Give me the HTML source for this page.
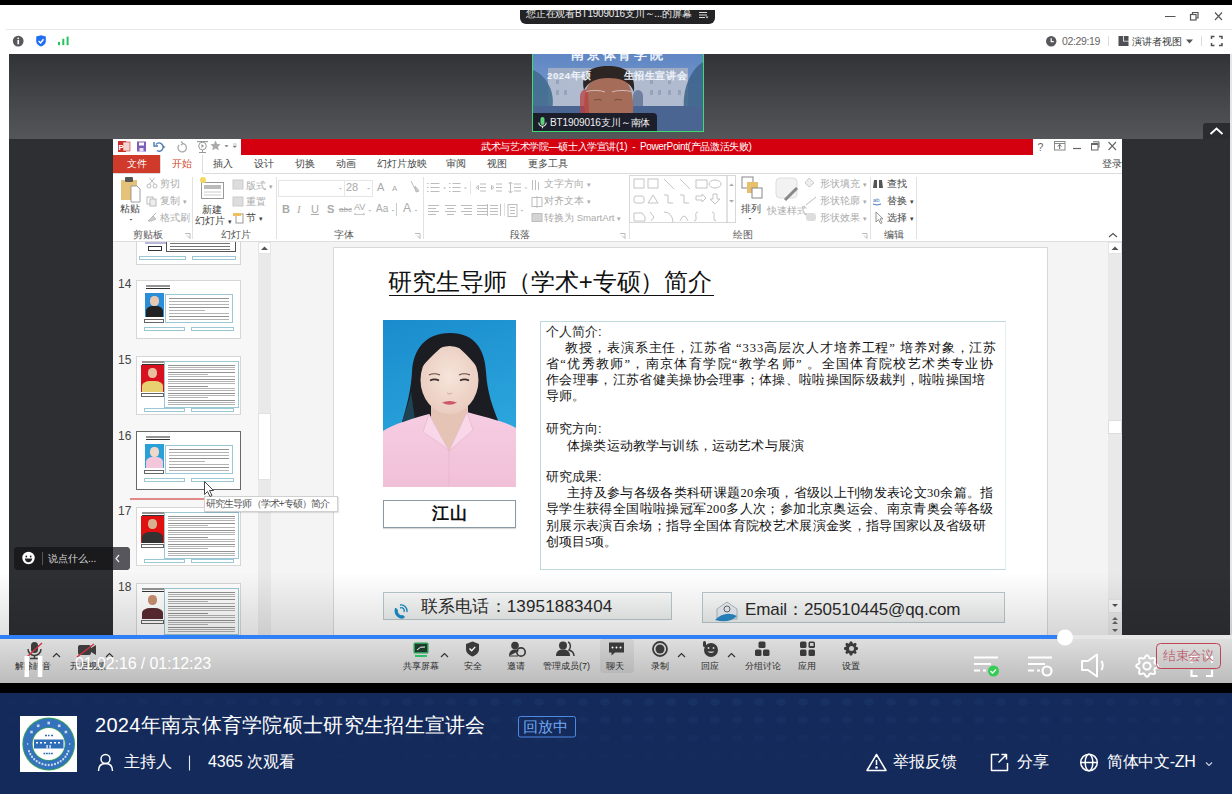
<!DOCTYPE html>
<html><head><meta charset="utf-8">
<style>
*{margin:0;padding:0;box-sizing:border-box}
html,body{width:1232px;height:794px;overflow:hidden;background:#fff;font-family:"Liberation Sans",sans-serif}
.a{position:absolute}
#topblack{left:0;top:0;width:1232px;height:5px;background:#000}
#hdr{left:0;top:5px;width:1232px;height:49px;background:#fff}
#hline{left:6px;top:29px;width:1226px;height:1px;background:#e8e8e8}
#video{left:9px;top:54px;width:1221px;height:581px;background:#2e2f33}
#vgrad{left:9px;top:54px;width:1221px;height:85px;background:linear-gradient(#323336,#55565a)}
#rightedge{left:1230px;top:54px;width:2px;height:581px;background:#e6e6e6}
#leftedge{left:0;top:54px;width:9px;height:581px;background:#fff}
#ppt{left:113px;top:139px;width:1009px;height:496px;background:#fff;overflow:hidden}
#prog{left:0;top:635px;width:1232px;height:4px;background:#e6e6e6}
#progfill{left:0;top:635px;width:1065px;height:4px;background:#2f80f7}
#ctrl{left:0;top:639px;width:1232px;height:44px;background:linear-gradient(#dedede,#bcbcbc)}
#blk{left:0;top:683px;width:1232px;height:10px;background:#000}
#foot{left:0;top:693px;width:1232px;height:101px;background:#132a5b}
</style></head><body>
<div class="a" id="topblack"></div>
<div class="a" id="hdr"></div>
<div class="a" id="hline"></div>

<div class="a" id="pill" style="left:520px;top:10px;width:195px;height:14px;background:#232325;border-radius:0 0 6px 6px;overflow:hidden"><div class="a" style="left:6px;top:-3px;white-space:nowrap;color:#eee;font-size:10px;line-height:14px;letter-spacing:-0.2px">您正在观看BT1909016支川～...的屏幕</div><svg class="a" style="left:178px;top:0" width="12" height="10"><path d="M1 2.5h8 M1 5h8 M1 7.5h6" stroke="#ddd" stroke-width="1"/><path d="M7.5 6.5 l1.5 2 l1.5-2z" fill="#ddd"/></svg></div>
<svg class="a" style="left:1160px;top:8px" width="72" height="18" viewBox="1160 8 72 18">
 <line x1="1165" y1="16.5" x2="1175.5" y2="16.5" stroke="#555" stroke-width="1"/>
 <rect x="1190.5" y="14.5" width="5.5" height="5.5" fill="none" stroke="#555" stroke-width="1.2"/>
 <path d="M1192.5 14.5 V12.5 H1198 V18 H1196" fill="none" stroke="#555" stroke-width="1.2"/>
 <path d="M1215 12.5 L1222 20 M1222 12.5 L1215 20" stroke="#555" stroke-width="1.1"/>
</svg>
<svg class="a" style="left:0;top:30px" width="80" height="24" viewBox="0 30 80 24">
 <circle cx="18.2" cy="41.1" r="5.4" fill="#57575c"/>
 <rect x="17.4" y="40" width="1.7" height="4.3" fill="#fff"/><circle cx="18.25" cy="38.3" r="0.9" fill="#fff"/>
 <path d="M36.2 36.6 L41 35.2 L45.8 36.6 V41.2 C45.8 44 43.4 45.6 41 46.6 C38.6 45.6 36.2 44 36.2 41.2 Z" fill="#1f6ef2"/>
 <path d="M38.6 41 L40.6 43 L43.5 39.3" fill="none" stroke="#fff" stroke-width="1.4"/>
 <rect x="58" y="42" width="2" height="3.2" fill="#25c35f"/>
 <rect x="62.3" y="38.8" width="2" height="6.4" fill="#25c35f"/>
 <rect x="66.6" y="36.6" width="2" height="8.6" fill="#25c35f"/>
</svg>
<svg class="a" style="left:1040px;top:30px" width="192" height="24" viewBox="1040 30 192 24">
 <circle cx="1051.2" cy="41.2" r="5.2" fill="#57575c"/>
 <path d="M1051.2 38.3 V41.6 H1053.8" fill="none" stroke="#fff" stroke-width="1.2"/>
 <line x1="1108.5" y1="36" x2="1108.5" y2="46" stroke="#ddd"/>
 <path d="M1118.5 36 h4.5 v5.5 h5.5 v4.5 h-10 z" fill="#4f4f55"/><rect x="1123.8" y="36" width="4.7" height="4.8" fill="#4f4f55"/>
 <path d="M1186 39.5 h7 l-3.5 4 z" fill="#555"/>
 <line x1="1201.5" y1="36" x2="1201.5" y2="46" stroke="#ddd"/>
 <path d="M1211.5 39 v-2.5 h3 M1219 36.5 h3 v2.5 M1222 43 v2.6 h-3 M1214.5 45.6 h-3 v-2.6" fill="none" stroke="#4f4f55" stroke-width="1.5"/>
</svg>
<div class="a" style="left:1062px;top:35px;font-size:10.5px;line-height:13px;color:#666;white-space:nowrap;letter-spacing:-0.35px">02:29:19</div>
<div class="a" style="left:1132px;top:35px;font-size:9.6px;line-height:13px;color:#333;white-space:nowrap">演讲者视图</div>
<div class="a" id="leftedge"></div>
<div class="a" id="video"></div>
<div class="a" id="vgrad"></div>
<div class="a" id="rightedge"></div>

<div class="a" id="thumb" style="left:532px;top:54px;width:172px;height:78px;border:1px solid #3ddc6f;border-top:none;overflow:hidden;background:#6f8fc0">
 <svg class="a" style="left:0;top:0" width="170" height="77" viewBox="533 54 170 77">
  <defs><linearGradient id="sky" x1="0" y1="0" x2="0" y2="1"><stop offset="0" stop-color="#5f86c4"/><stop offset="1" stop-color="#8aa6cf"/></linearGradient></defs>
  <rect x="533" y="54" width="170" height="77" fill="url(#sky)"/>
  <rect x="548" y="72" width="140" height="38" fill="#b0bbcf"/>
  <rect x="548" y="68" width="140" height="6" fill="#9eacc4"/>
  <g fill="#95a3bd"><rect x="556" y="90" width="3" height="5"/><rect x="564" y="90" width="3" height="5"/><rect x="650" y="90" width="3" height="5"/><rect x="658" y="90" width="3" height="5"/><rect x="668" y="90" width="3" height="5"/><rect x="678" y="90" width="3" height="5"/><rect x="556" y="80" width="3" height="4"/><rect x="650" y="80" width="3" height="4"/><rect x="668" y="80" width="3" height="4"/></g>
  <path d="M633 110 v-14 a5 6 0 0 1 10 0 v14z" fill="#6f7fa0"/>
  <path d="M533 70 C545 75 556 90 552 110 H533Z" fill="#3f6a8c" opacity=".85"/>
  <path d="M703 62 C690 70 682 90 684 110 H703Z" fill="#3c6288" opacity=".85"/>
  <rect x="533" y="106" width="170" height="25" fill="#4a6592"/>
  <path d="M585 113 C583 95 584 78 608 74 C630 74 634 92 633 113Z" fill="#a66c5a"/>
  <path d="M584 90 C580 72 592 66 608 66 C624 66 636 72 634 92 C630 82 622 78 608 78 C596 78 588 82 584 90Z" fill="#2c2523"/>
  <path d="M580 96 C581 90 585 88 588 91 L589 113 H580Z" fill="#b84040" opacity=".75"/>
  <path d="M586 91.5 C592 90 600 90 605 92 M612 92 C617 90 626 90 631 91.5" stroke="#ddd2d2" stroke-width="1" fill="none" opacity=".75"/>
  <path d="M594 100 q4-1 8 0 M614 100 q4-1 8 0" stroke="#5a3a30" stroke-width="0.9" fill="none" opacity=".7"/>
 </svg>
 <div class="a" style="left:38px;top:-6px;color:#eef3fb;font-size:13px;font-weight:bold;line-height:14px;letter-spacing:2.8px;white-space:nowrap">南京体育学院</div>
 <div class="a" style="left:14px;top:16px;width:150px;color:#eef3fb;font-size:9.5px;font-weight:bold;line-height:11px;white-space:nowrap;letter-spacing:0.6px">2024年硕<span style="opacity:0">士研究</span>生招生宣讲会</div>
 <div class="a" style="left:0;top:59px;width:124px;height:19px;background:rgba(22,22,28,.88);border-radius:0 4px 0 0"></div>
 <svg class="a" style="left:4px;top:62px" width="12" height="14"><rect x="3.5" y="1" width="4" height="8" rx="2" fill="#5fd37a"/><path d="M1.8 6.5 a3.7 3.7 0 0 0 7.4 0 M5.5 10.2 v2" fill="none" stroke="#e8e8e8" stroke-width="1.1"/></svg>
 <div class="a" style="left:17px;top:62px;color:#f0f0f0;font-size:10px;line-height:13px;white-space:nowrap;letter-spacing:-0.1px">BT1909016支川～南体</div>
</div>
<div class="a" id="ppt"></div>

<!-- PPT window -->
<div class="a" style="left:241px;top:139px;width:792px;height:16px;background:#d5000f"></div>
<div class="a" style="left:481px;top:139px;height:16px;color:#fff;font-size:10px;line-height:16px;white-space:nowrap;letter-spacing:-0.35px">武术与艺术学院—硕士入学宣讲(1)&nbsp; - &nbsp;PowerPoint(产品激活失败)</div>
<svg class="a" style="left:113px;top:139px" width="130" height="16" viewBox="113 139 130 16">
 <rect x="118" y="141" width="8" height="11" fill="#c9302c"/><rect x="123" y="142" width="7" height="9" fill="#f3d6d3" stroke="#c9302c" stroke-width="0.6"/>
 <text x="118.5" y="150" font-size="8" fill="#fff" font-family="Liberation Sans" font-weight="bold">P</text>
 <rect x="137" y="141.5" width="9" height="10" fill="#7b5fb8"/><rect x="139" y="142.5" width="5" height="3" fill="#fff"/><rect x="139.5" y="148" width="4" height="3.5" fill="#e8e0f5"/>
 <path d="M156 144.5 a4 4 0 1 1 1 6" fill="none" stroke="#4a7ab8" stroke-width="1.4"/><path d="M154 142 v4 h4" fill="none" stroke="#4a7ab8" stroke-width="1.4"/>
 <path d="M162.5 146.5 l1.5 1.5 l1.5-1.5z" fill="#555"/>
 <path d="M182 143.5 a4.2 4.2 0 1 1 -3 1.5" fill="none" stroke="#aaa" stroke-width="1.3"/><path d="M181 141.5 l2 2 l-2.3 1.8" fill="none" stroke="#aaa" stroke-width="1.1"/>
 <rect x="197" y="141" width="11" height="1.2" fill="#999"/><circle cx="202.5" cy="146" r="3.8" fill="none" stroke="#999" stroke-width="1"/><path d="M201.5 144 l2.5 2 l-2.5 2z" fill="#999"/><path d="M202.5 150 v2.5 M199 152.5 h7" stroke="#999" stroke-width="1"/>
 <path d="M215.5 140.5 l1.6 3.4 3.6.4 -2.7 2.4 .8 3.6 -3.3-1.9 -3.3 1.9 .8-3.6 -2.7-2.4 3.6-.4z" fill="#aaa"/>
 <path d="M225 145.5 l1.5 1.5 l1.5-1.5z M233 144 h3.5 M233 146 l1.75 1.6 l1.75-1.6z" fill="#777" stroke="#777" stroke-width="0.5"/>
</svg>
<svg class="a" style="left:1033px;top:139px" width="89" height="16" viewBox="1033 139 89 16">
 <text x="1037.5" y="150.5" font-size="10.5" fill="#666" font-family="Liberation Sans">?</text>
 <rect x="1054.5" y="141.5" width="10.5" height="8.5" fill="none" stroke="#888" stroke-width="1"/><path d="M1054.5 143.5 h10.5" stroke="#888"/><path d="M1059.7 149 v-4.5 M1057.8 146.5 l1.9-2 1.9 2" fill="none" stroke="#666" stroke-width="1"/>
 <path d="M1073 148.5 h8" stroke="#666" stroke-width="1.2"/>
 <rect x="1091.5" y="143.5" width="6.5" height="6.5" fill="none" stroke="#666" stroke-width="1"/><path d="M1091.5 144.5 h6.5 M1093 141.8 h6 v6" fill="none" stroke="#666" stroke-width="1"/>
 <path d="M1108.5 142 l7.5 8 M1116 142 l-7.5 8" stroke="#666" stroke-width="1.1"/>
</svg>
<!-- tabs row -->
<div class="a" style="left:113px;top:155px;width:47px;height:18px;background:#cf3a2a;color:#fff;font-size:10px;line-height:18px;text-align:center">文件</div>
<div class="a" style="left:160px;top:155px;width:43px;height:19px;background:#fff;border-left:1px solid #dcdcdc;border-right:1px solid #dcdcdc;color:#d24726;font-size:10px;line-height:18px;text-align:center">开始</div>
<div class="a" style="left:113px;top:173px;width:1009px;height:1px;background:#dcdcdc"></div>
<div class="a" style="left:160px;top:173px;width:43px;height:1px;background:#fff"></div>
<div class="a" id="tabs" style="top:155px;left:0;height:18px;font-size:10px;line-height:18px;color:#444;white-space:nowrap"></div>
<div class="a" style="left:213px;top:155px;font-size:10px;line-height:18px;color:#444">插入</div>
<div class="a" style="left:254px;top:155px;font-size:10px;line-height:18px;color:#444">设计</div>
<div class="a" style="left:295px;top:155px;font-size:10px;line-height:18px;color:#444">切换</div>
<div class="a" style="left:336px;top:155px;font-size:10px;line-height:18px;color:#444">动画</div>
<div class="a" style="left:377px;top:155px;font-size:10px;line-height:18px;color:#444">幻灯片放映</div>
<div class="a" style="left:446px;top:155px;font-size:10px;line-height:18px;color:#444">审阅</div>
<div class="a" style="left:487px;top:155px;font-size:10px;line-height:18px;color:#444">视图</div>
<div class="a" style="left:528px;top:155px;font-size:10px;line-height:18px;color:#444">更多工具</div>
<div class="a" style="left:1102px;top:155px;font-size:10px;line-height:18px;color:#444">登录</div>

<!-- panels -->
<div class="a" style="left:113px;top:242px;width:145px;height:393px;background:#f7f7f7"></div>
<div class="a" style="left:258px;top:242px;width:13px;height:393px;background:#e9e9e9"></div>
<div class="a" style="left:258px;top:242px;width:13px;height:12px;background:#fff;border:1px solid #e4e4e4"></div>
<svg class="a" style="left:258px;top:242px" width="13" height="12"><path d="M3 8 l3.5-3.5 l3.5 3.5z" fill="#555"/></svg>
<div class="a" style="left:258px;top:413px;width:13px;height:67px;background:#fff;border:1px solid #e2e2e2"></div>
<div class="a" style="left:271px;top:242px;width:837px;height:393px;background:#f4f4f4"></div>
<div class="a" style="left:1108px;top:242px;width:14px;height:393px;background:#e9e9e9"></div>
<div class="a" style="left:1108px;top:242px;width:14px;height:12px;background:#fff;border:1px solid #e4e4e4"></div>
<svg class="a" style="left:1108px;top:242px" width="14" height="12"><path d="M3.5 8 l3.5-3.5 l3.5 3.5z" fill="#555"/></svg>
<div class="a" style="left:1108px;top:420px;width:14px;height:14px;background:#fff;border:1px solid #ddd"></div>
<div class="a" style="left:1108px;top:599px;width:14px;height:14px;background:#f8f8f8;border:1px solid #e4e4e4"></div>
<svg class="a" style="left:1108px;top:599px" width="14" height="36"><path d="M4 5 l3 3 l3-3z" fill="#555"/><path d="M4 21 l3-3 l3 3z M4 25 l3-3 l3 3z M4 30 l3 3 l3-3z" fill="#666"/></svg>
<div class="a" style="left:136px;top:242px;width:105px;height:23px;background:#fff;border:1px solid #d6d6d6;border-top:none;overflow:hidden">
 <div class="a" style="left:8px;top:0;width:21px;height:1.5px;background:#b8b8d8"></div>
 <div class="a" style="left:11px;top:4px;width:14px;height:5px;border:1px solid #333"></div>
 <div class="a" style="left:29px;top:-2px;width:70px;height:12px;border:1px solid #555"><div class="a" style="left:3px;top:2px;width:60px;height:1px;background:#777"></div><div class="a" style="left:3px;top:5px;width:60px;height:1px;background:#777"></div><div class="a" style="left:3px;top:8px;width:60px;height:1px;background:#777"></div></div>
 <div class="a" style="left:2px;top:14px;width:47px;height:4px;border:0.8px solid #9cc8d6"></div>
 <div class="a" style="left:55px;top:14px;width:44px;height:4px;border:0.8px solid #9cc8d6"></div>
</div><div class="a" style="left:136px;top:280px;width:105px;height:59px;background:#fff;border:1px solid #d6d6d6;overflow:hidden">
 <div class="a" style="left:9px;top:4px;width:24px;height:2px;background:#666;opacity:.7"></div>
 <div class="a" style="left:9px;top:6.5px;width:24px;height:0.6px;background:#333"></div>
 <div class="a" style="left:8px;top:12px;width:19px;height:24px;background:#2a8fd8;overflow:hidden"><div class="a" style="left:5.0px;top:3px;width:9px;height:10px;border-radius:45%;background:#e8c8b0"></div><div class="a" style="left:1px;top:13px;width:17px;height:12px;border-radius:40% 40% 0 0;background:#222"></div></div>
 <div class="a" style="left:7px;top:38px;width:20px;height:4px;border:0.8px solid #666"></div>
 <div class="a" style="left:28px;top:13px;width:68px;height:29px;border:0.8px solid #9cc8d6;background:#fff"><div class="a" style="left:3px;top:2.5px;width:60px;height:0.8px;background:#777;opacity:0.8"></div><div class="a" style="left:3px;top:5.5px;width:60px;height:0.8px;background:#777;opacity:0.55"></div><div class="a" style="left:3px;top:8.5px;width:60px;height:0.8px;background:#777;opacity:0.55"></div><div class="a" style="left:3px;top:11.5px;width:60px;height:0.8px;background:#777;opacity:0.8"></div><div class="a" style="left:3px;top:14.5px;width:36px;height:0.8px;background:#777;opacity:0.55"></div><div class="a" style="left:3px;top:17.5px;width:60px;height:0.8px;background:#777;opacity:0.55"></div><div class="a" style="left:3px;top:20.5px;width:60px;height:0.8px;background:#777;opacity:0.8"></div><div class="a" style="left:3px;top:23.5px;width:60px;height:0.8px;background:#777;opacity:0.55"></div></div>
 <div class="a" style="left:7px;top:46px;width:41px;height:4px;border:0.8px solid #9cc8d6"></div>
 <div class="a" style="left:54px;top:46px;width:43px;height:4px;border:0.8px solid #9cc8d6"></div>
</div><div class="a" style="left:136px;top:356px;width:105px;height:59px;background:#fff;border:1px solid #d6d6d6;overflow:hidden">
 <div class="a" style="left:5px;top:4px;width:24px;height:2px;background:#666;opacity:.7"></div>
 <div class="a" style="left:5px;top:6.5px;width:24px;height:0.6px;background:#333"></div>
 <div class="a" style="left:4px;top:8px;width:23px;height:27px;background:#d81020;overflow:hidden"><div class="a" style="left:7.0px;top:3px;width:9px;height:10px;border-radius:45%;background:#e8c0a0"></div><div class="a" style="left:1px;top:16px;width:21px;height:12px;border-radius:40% 40% 0 0;background:#e8d070"></div></div>
 <div class="a" style="left:4px;top:36px;width:23px;height:4px;border:0.8px solid #666"></div>
 <div class="a" style="left:27px;top:4px;width:75px;height:47px;border:0.8px solid #9cc8d6;background:#fff"><div class="a" style="left:3px;top:2.5px;width:67px;height:0.8px;background:#777;opacity:0.8"></div><div class="a" style="left:3px;top:4.8px;width:67px;height:0.8px;background:#777;opacity:0.55"></div><div class="a" style="left:3px;top:7.2px;width:67px;height:0.8px;background:#777;opacity:0.55"></div><div class="a" style="left:3px;top:9.5px;width:67px;height:0.8px;background:#777;opacity:0.8"></div><div class="a" style="left:3px;top:11.8px;width:40px;height:0.8px;background:#777;opacity:0.55"></div><div class="a" style="left:3px;top:14.2px;width:67px;height:0.8px;background:#777;opacity:0.55"></div><div class="a" style="left:3px;top:16.5px;width:67px;height:0.8px;background:#777;opacity:0.8"></div><div class="a" style="left:3px;top:18.8px;width:67px;height:0.8px;background:#777;opacity:0.55"></div><div class="a" style="left:3px;top:21.2px;width:67px;height:0.8px;background:#777;opacity:0.55"></div><div class="a" style="left:3px;top:23.5px;width:40px;height:0.8px;background:#777;opacity:0.8"></div><div class="a" style="left:3px;top:25.8px;width:67px;height:0.8px;background:#777;opacity:0.55"></div><div class="a" style="left:3px;top:28.2px;width:67px;height:0.8px;background:#777;opacity:0.55"></div><div class="a" style="left:3px;top:30.5px;width:67px;height:0.8px;background:#777;opacity:0.8"></div><div class="a" style="left:3px;top:32.8px;width:67px;height:0.8px;background:#777;opacity:0.55"></div><div class="a" style="left:3px;top:35.2px;width:40px;height:0.8px;background:#777;opacity:0.55"></div><div class="a" style="left:3px;top:37.5px;width:67px;height:0.8px;background:#777;opacity:0.8"></div><div class="a" style="left:3px;top:39.8px;width:67px;height:0.8px;background:#777;opacity:0.55"></div><div class="a" style="left:3px;top:42.2px;width:67px;height:0.8px;background:#777;opacity:0.55"></div></div>
 <div class="a" style="left:7px;top:51px;width:41px;height:4px;border:0.8px solid #9cc8d6"></div>
 <div class="a" style="left:54px;top:51px;width:43px;height:4px;border:0.8px solid #9cc8d6"></div>
</div><div class="a" style="left:136px;top:431px;width:105px;height:59px;background:#fff;border:1px solid #6a6a6a;overflow:hidden">
 <div class="a" style="left:9px;top:4px;width:24px;height:2px;background:#666;opacity:.7"></div>
 <div class="a" style="left:9px;top:6.5px;width:24px;height:0.6px;background:#333"></div>
 <div class="a" style="left:8px;top:12px;width:19px;height:24px;background:#2aa0d8;overflow:hidden"><div class="a" style="left:5.0px;top:3px;width:9px;height:10px;border-radius:45%;background:#f0d8c8"></div><div class="a" style="left:1px;top:13px;width:17px;height:12px;border-radius:40% 40% 0 0;background:#f4c6dc"></div></div>
 <div class="a" style="left:7px;top:38px;width:20px;height:4px;border:0.8px solid #666"></div>
 <div class="a" style="left:28px;top:13px;width:68px;height:29px;border:0.8px solid #9cc8d6;background:#fff"><div class="a" style="left:3px;top:2.5px;width:60px;height:0.8px;background:#777;opacity:0.8"></div><div class="a" style="left:3px;top:5.5px;width:60px;height:0.8px;background:#777;opacity:0.55"></div><div class="a" style="left:3px;top:8.5px;width:60px;height:0.8px;background:#777;opacity:0.55"></div><div class="a" style="left:3px;top:11.5px;width:60px;height:0.8px;background:#777;opacity:0.8"></div><div class="a" style="left:3px;top:14.5px;width:36px;height:0.8px;background:#777;opacity:0.55"></div><div class="a" style="left:3px;top:17.5px;width:60px;height:0.8px;background:#777;opacity:0.55"></div><div class="a" style="left:3px;top:20.5px;width:60px;height:0.8px;background:#777;opacity:0.8"></div><div class="a" style="left:3px;top:23.5px;width:60px;height:0.8px;background:#777;opacity:0.55"></div></div>
 <div class="a" style="left:7px;top:46px;width:41px;height:4px;border:0.8px solid #9cc8d6"></div>
 <div class="a" style="left:54px;top:46px;width:43px;height:4px;border:0.8px solid #9cc8d6"></div>
</div><div class="a" style="left:136px;top:507px;width:105px;height:59px;background:#fff;border:1px solid #d6d6d6;overflow:hidden">
 <div class="a" style="left:5px;top:4px;width:24px;height:2px;background:#666;opacity:.7"></div>
 <div class="a" style="left:5px;top:6.5px;width:24px;height:0.6px;background:#333"></div>
 <div class="a" style="left:4px;top:8px;width:23px;height:27px;background:#e01010;overflow:hidden"><div class="a" style="left:7.0px;top:3px;width:9px;height:10px;border-radius:45%;background:#d8b090"></div><div class="a" style="left:1px;top:16px;width:21px;height:12px;border-radius:40% 40% 0 0;background:#333"></div></div>
 <div class="a" style="left:4px;top:36px;width:23px;height:4px;border:0.8px solid #666"></div>
 <div class="a" style="left:27px;top:4px;width:75px;height:47px;border:0.8px solid #9cc8d6;background:#fff"><div class="a" style="left:3px;top:2.5px;width:67px;height:0.8px;background:#777;opacity:0.8"></div><div class="a" style="left:3px;top:4.8px;width:67px;height:0.8px;background:#777;opacity:0.55"></div><div class="a" style="left:3px;top:7.2px;width:67px;height:0.8px;background:#777;opacity:0.55"></div><div class="a" style="left:3px;top:9.5px;width:67px;height:0.8px;background:#777;opacity:0.8"></div><div class="a" style="left:3px;top:11.8px;width:40px;height:0.8px;background:#777;opacity:0.55"></div><div class="a" style="left:3px;top:14.2px;width:67px;height:0.8px;background:#777;opacity:0.55"></div><div class="a" style="left:3px;top:16.5px;width:67px;height:0.8px;background:#777;opacity:0.8"></div><div class="a" style="left:3px;top:18.8px;width:67px;height:0.8px;background:#777;opacity:0.55"></div><div class="a" style="left:3px;top:21.2px;width:67px;height:0.8px;background:#777;opacity:0.55"></div><div class="a" style="left:3px;top:23.5px;width:40px;height:0.8px;background:#777;opacity:0.8"></div><div class="a" style="left:3px;top:25.8px;width:67px;height:0.8px;background:#777;opacity:0.55"></div><div class="a" style="left:3px;top:28.2px;width:67px;height:0.8px;background:#777;opacity:0.55"></div><div class="a" style="left:3px;top:30.5px;width:67px;height:0.8px;background:#777;opacity:0.8"></div><div class="a" style="left:3px;top:32.8px;width:67px;height:0.8px;background:#777;opacity:0.55"></div><div class="a" style="left:3px;top:35.2px;width:40px;height:0.8px;background:#777;opacity:0.55"></div><div class="a" style="left:3px;top:37.5px;width:67px;height:0.8px;background:#777;opacity:0.8"></div><div class="a" style="left:3px;top:39.8px;width:67px;height:0.8px;background:#777;opacity:0.55"></div><div class="a" style="left:3px;top:42.2px;width:67px;height:0.8px;background:#777;opacity:0.55"></div></div>
 <div class="a" style="left:7px;top:51px;width:41px;height:4px;border:0.8px solid #9cc8d6"></div>
 <div class="a" style="left:54px;top:51px;width:43px;height:4px;border:0.8px solid #9cc8d6"></div>
</div><div class="a" style="left:136px;top:583px;width:105px;height:59px;background:#fff;border:1px solid #d6d6d6;overflow:hidden">
 <div class="a" style="left:5px;top:4px;width:24px;height:2px;background:#666;opacity:.7"></div>
 <div class="a" style="left:5px;top:6.5px;width:24px;height:0.6px;background:#333"></div>
 <div class="a" style="left:4px;top:8px;width:23px;height:27px;background:#ffffff;overflow:hidden"><div class="a" style="left:7.0px;top:3px;width:9px;height:10px;border-radius:45%;background:#c89070"></div><div class="a" style="left:1px;top:16px;width:21px;height:12px;border-radius:40% 40% 0 0;background:#5a2a30"></div></div>
 <div class="a" style="left:4px;top:36px;width:23px;height:4px;border:0.8px solid #666"></div>
 <div class="a" style="left:27px;top:4px;width:75px;height:47px;border:0.8px solid #9cc8d6;background:#fff"><div class="a" style="left:3px;top:2.5px;width:67px;height:0.8px;background:#777;opacity:0.8"></div><div class="a" style="left:3px;top:4.8px;width:67px;height:0.8px;background:#777;opacity:0.55"></div><div class="a" style="left:3px;top:7.2px;width:67px;height:0.8px;background:#777;opacity:0.55"></div><div class="a" style="left:3px;top:9.5px;width:67px;height:0.8px;background:#777;opacity:0.8"></div><div class="a" style="left:3px;top:11.8px;width:40px;height:0.8px;background:#777;opacity:0.55"></div><div class="a" style="left:3px;top:14.2px;width:67px;height:0.8px;background:#777;opacity:0.55"></div><div class="a" style="left:3px;top:16.5px;width:67px;height:0.8px;background:#777;opacity:0.8"></div><div class="a" style="left:3px;top:18.8px;width:67px;height:0.8px;background:#777;opacity:0.55"></div><div class="a" style="left:3px;top:21.2px;width:67px;height:0.8px;background:#777;opacity:0.55"></div><div class="a" style="left:3px;top:23.5px;width:40px;height:0.8px;background:#777;opacity:0.8"></div><div class="a" style="left:3px;top:25.8px;width:67px;height:0.8px;background:#777;opacity:0.55"></div><div class="a" style="left:3px;top:28.2px;width:67px;height:0.8px;background:#777;opacity:0.55"></div><div class="a" style="left:3px;top:30.5px;width:67px;height:0.8px;background:#777;opacity:0.8"></div><div class="a" style="left:3px;top:32.8px;width:67px;height:0.8px;background:#777;opacity:0.55"></div><div class="a" style="left:3px;top:35.2px;width:40px;height:0.8px;background:#777;opacity:0.55"></div><div class="a" style="left:3px;top:37.5px;width:67px;height:0.8px;background:#777;opacity:0.8"></div><div class="a" style="left:3px;top:39.8px;width:67px;height:0.8px;background:#777;opacity:0.55"></div><div class="a" style="left:3px;top:42.2px;width:67px;height:0.8px;background:#777;opacity:0.55"></div></div>
 <div class="a" style="left:7px;top:51px;width:41px;height:4px;border:0.8px solid #9cc8d6"></div>
 <div class="a" style="left:54px;top:51px;width:43px;height:4px;border:0.8px solid #9cc8d6"></div>
</div><div class="a" style="left:118px;top:276px;font-size:12px;line-height:16px;color:#444">14</div><div class="a" style="left:118px;top:352px;font-size:12px;line-height:16px;color:#444">15</div><div class="a" style="left:118px;top:428px;font-size:12px;line-height:16px;color:#444">16</div><div class="a" style="left:118px;top:503px;font-size:12px;line-height:16px;color:#444">17</div><div class="a" style="left:118px;top:579px;font-size:12px;line-height:16px;color:#444">18</div><!-- main slide -->
<div class="a" id="slide" style="left:333px;top:247px;width:715px;height:402px;background:#fff;border:1px solid #d8d8d8;overflow:hidden">
 <div class="a" style="left:54px;top:19px;font-size:24px;line-height:30px;color:#111;white-space:nowrap;letter-spacing:-0.15px">研究生导师（学术+专硕）简介</div>
 <div class="a" style="left:55px;top:47px;width:325px;height:1.2px;background:#111"></div>
 <svg class="a" style="left:49px;top:72px" width="133" height="167" viewBox="0 0 133 167">
  <defs><linearGradient id="bg1" x1="0" y1="0" x2="0.3" y2="1"><stop offset="0" stop-color="#1a8ccd"/><stop offset="1" stop-color="#2eaadf"/></linearGradient>
  <linearGradient id="shirt" x1="0" y1="0" x2="0" y2="1"><stop offset="0" stop-color="#f6cde2"/><stop offset="1" stop-color="#f1c0d8"/></linearGradient>
  <radialGradient id="skin" cx="0.5" cy="0.45" r="0.6"><stop offset="0" stop-color="#f6e4da"/><stop offset="1" stop-color="#e9cbbd"/></radialGradient></defs>
  <rect x="0" y="0" width="133" height="167" fill="url(#bg1)"/>
  <path d="M67 13 C42 13 30 30 29 52 C28 70 24 85 19 102 C28 108 42 104 50 100 L84 100 C94 104 106 108 116 103 C110 88 104 72 103 52 C102 30 92 13 67 13Z" fill="#1c1d22"/>
  <path d="M19 102 C22 92 26 82 28 72 L32 100Z" fill="#1f4d63" opacity=".8"/>
  <path d="M48 84 H85 V112 L66 132 L48 112Z" fill="#e6c4b5"/>
  <ellipse cx="66.5" cy="60" rx="29" ry="34" fill="url(#skin)"/>
  <path d="M38 48 C40 28 52 20 67 20 C60 26 50 34 38 48Z M95 48 C93 28 82 20 67 20 C74 26 84 34 95 48Z" fill="#1c1d22"/>
  <path d="M46 55 q5-2.5 11 0 M76 55 q5-2.5 11 0" stroke="#6a4a40" stroke-width="1.2" fill="none"/>
  <path d="M47 60.5 q4.5-2.2 9 0 M77 60.5 q4.5-2.2 9 0" stroke="#3a2a28" stroke-width="1.6" fill="none"/>
  <path d="M64 73 q2.5 2 5 0" stroke="#d2a898" stroke-width="1" fill="none"/>
  <path d="M59 82.5 q7.5-3 15 0 q-7.5 4.5 -15 0z" fill="#cc5866"/>
  <path d="M0 111 C10 104 32 98 46 94 L66 131 L84 92 C100 97 122 101 133 108 V167 H0Z" fill="url(#shirt)"/>
  <path d="M46 94 L40 112 L58 124 L66 131Z M84 92 L90 110 L74 124 L66 131Z" fill="#f8d8e8" stroke="#e4b0c8" stroke-width="0.6"/>
  <path d="M66 131 V167" stroke="#e8b6cc" stroke-width="0.8"/>
 </svg>
 <div class="a" style="left:49px;top:252px;width:133px;height:28px;border:1px solid #8a9aa4;box-shadow:0 1px 1px rgba(0,0,0,.15);text-align:center;font-size:17px;line-height:26px;font-weight:bold;color:#111;letter-spacing:1px">江山</div>
 <div class="a" style="left:206px;top:73px;width:466px;height:249px;border:1px solid #bcd8de;border-right-color:#e6eff2"></div>
 <div class="a" id="tb" style="left:212px;top:76px;width:460px;color:#111">
  <style>#tb div{position:absolute;left:0;white-space:nowrap}#tb .h{font-size:13px;line-height:16px;color:#222}#tb .b{font-size:12.5px;line-height:16px;font-family:"Liberation Serif",serif;color:#111}</style>
  <div class="h" style="top:0">个人简介:</div>
  <div class="b" style="top:16px;left:19px;letter-spacing:0.92px">教授，表演系主任，江苏省 “333高层次人才培养工程” 培养对象，江苏</div>
  <div class="b" style="top:32px;letter-spacing:1.34px">省“优秀教师”，南京体育学院“教学名师” 。全国体育院校艺术类专业协</div>
  <div class="b" style="top:48px;letter-spacing:0.32px">作会理事，江苏省健美操协会理事；体操、啦啦操国际级裁判，啦啦操国培</div>
  <div class="b" style="top:64px">导师。</div>
  <div class="h" style="top:97px">研究方向:</div>
  <div class="b" style="top:114px;left:21px;letter-spacing:0.17px">体操类运动教学与训练，运动艺术与展演</div>
  <div class="h" style="top:145px">研究成果:</div>
  <div class="b" style="top:161px;left:21px;letter-spacing:0.34px">主持及参与各级各类科研课题20余项，省级以上刊物发表论文30余篇。指</div>
  <div class="b" style="top:177px;letter-spacing:0.37px">导学生获得全国啦啦操冠军200多人次；参加北京奥运会、南京青奥会等各级</div>
  <div class="b" style="top:194px;letter-spacing:0.33px">别展示表演百余场；指导全国体育院校艺术展演金奖，指导国家以及省级研</div>
  <div class="b" style="top:210px">创项目5项。</div>
 </div>
 <div class="a" style="left:49px;top:344px;width:289px;height:28px;border:1px solid #b8c8cc;background:linear-gradient(#fafafa,#eef0f0)"></div>
 <svg class="a" style="left:58px;top:354px" width="18" height="18"><path d="M3 6 q-2 6 4 10 q4 2 6 -1 l-2-2 q-2 1-4-1 q-2-2-1-4 l-2-2z" fill="#1a8fc8"/><path d="M8 3 a6 6 0 0 1 7 7 M8 6 a3 3 0 0 1 4 4" fill="none" stroke="#1a8fc8" stroke-width="1.4"/></svg>
 <div class="a" style="left:87px;top:348px;font-size:17px;line-height:22px;color:#2a2a2a;white-space:nowrap;letter-spacing:0.15px">联系电话：13951883404</div>
 <div class="a" style="left:368px;top:344px;width:303px;height:31px;border:1px solid #b8c8cc;background:linear-gradient(#fafafa,#eef0f0)"></div>
 <svg class="a" style="left:380px;top:352px" width="26" height="22"><path d="M3 9 l10-7 l10 7 v10 h-20z" fill="#e8eef4" stroke="#9aa" stroke-width="0.8"/><circle cx="13" cy="9" r="3" fill="none" stroke="#555" stroke-width="0.9"/><path d="M1 20 q10 -10 22 -4 q-8 8 -22 4z" fill="#2a8ac8"/></svg>
 <div class="a" style="left:411px;top:351px;font-size:17px;line-height:22px;color:#2a2a2a;white-space:nowrap;letter-spacing:-0.1px">Email：250510445@qq.com</div>
</div>
<!-- ribbon body -->
<div class="a" style="left:113px;top:241px;width:1009px;height:1px;background:#dedede"></div>

<div class="a" style="left:192px;top:177px;width:1px;height:62px;background:#e2e2e2"></div>
<div class="a" style="left:276px;top:177px;width:1px;height:62px;background:#e2e2e2"></div>
<div class="a" style="left:423px;top:177px;width:1px;height:62px;background:#e2e2e2"></div>
<div class="a" style="left:629px;top:177px;width:1px;height:62px;background:#e2e2e2"></div>
<div class="a" style="left:870px;top:177px;width:1px;height:62px;background:#e2e2e2"></div>
<div class="a" style="left:916px;top:177px;width:1px;height:62px;background:#e2e2e2"></div>
<div class="a rb" style="left:0;top:0">
<style>.rb div{position:absolute;font-size:9.6px;line-height:11px;white-space:nowrap;color:#444}.rb .g{color:#aaa}</style>
<div style="left:120px;top:203px">粘贴</div>
<div class="g" style="left:160px;top:178px">剪切</div>
<div class="g" style="left:160px;top:195px">复制 <span style="font-size:7px">▾</span></div>
<div class="g" style="left:160px;top:212px">格式刷</div>
<div style="left:133px;top:229px;color:#555">剪贴板</div>
<div style="left:202px;top:204px">新建</div>
<div style="left:195px;top:215px">幻灯片 <span style="font-size:7px">▾</span></div>
<div class="g" style="left:246px;top:180px">版式 <span style="font-size:7px">▾</span></div>
<div class="g" style="left:246px;top:196px">重置</div>
<div style="left:246px;top:212px">节 <span style="font-size:7px">▾</span></div>
<div style="left:221px;top:229px;color:#555">幻灯片</div>
<div style="left:334px;top:229px;color:#555">字体</div>
<div class="g" style="left:544px;top:178px">文字方向 <span style="font-size:7px">▾</span></div>
<div class="g" style="left:544px;top:195px">对齐文本 <span style="font-size:7px">▾</span></div>
<div class="g" style="left:544px;top:212px">转换为 SmartArt <span style="font-size:7px">▾</span></div>
<div style="left:510px;top:229px;color:#555">段落</div>
<div style="left:741px;top:203px;font-size:10px">排列</div>
<div class="g" style="left:767px;top:205px">快速样式</div>
<div class="g" style="left:820px;top:178px">形状填充 <span style="font-size:7px">▾</span></div>
<div class="g" style="left:820px;top:195px">形状轮廓 <span style="font-size:7px">▾</span></div>
<div class="g" style="left:820px;top:212px">形状效果 <span style="font-size:7px">▾</span></div>
<div style="left:733px;top:229px;color:#555">绘图</div>
<div style="left:887px;top:178px">查找</div>
<div style="left:887px;top:195px">替换 <span style="font-size:7px">▾</span></div>
<div style="left:887px;top:212px">选择 <span style="font-size:7px">▾</span></div>
<div style="left:884px;top:229px;color:#555">编辑</div>
<div class="g" style="left:346px;top:180px;font-size:11px;line-height:15px">28</div>
<div class="g" style="left:282px;top:202px;font-size:11px;line-height:14px;font-weight:bold">B</div>
<div class="g" style="left:297px;top:202px;font-size:11px;line-height:14px;font-style:italic;font-family:'Liberation Serif'">I</div>
<div class="g" style="left:311px;top:202px;font-size:11px;line-height:14px;text-decoration:underline">U</div>
<div class="g" style="left:327px;top:202px;font-size:11px;line-height:14px;font-weight:bold">S</div>
<div class="g" style="left:339px;top:204px;font-size:8px;line-height:12px;text-decoration:line-through">abc</div>
<div class="g" style="left:354px;top:201px;font-size:9px;line-height:12px">AV</div>
<div class="g" style="left:376px;top:203px;font-size:10px;line-height:12px">Aa</div>
<div class="g" style="left:403px;top:201px;font-size:12px;line-height:14px">A</div>
<div class="g" style="left:377px;top:180px;font-size:11px;line-height:14px">A</div>
<div class="g" style="left:392px;top:183px;font-size:8px;line-height:12px">A</div>
</div>
<svg class="a" style="left:113px;top:173px" width="1009" height="68" viewBox="113 173 1009 68">
 <!-- paste -->
 <rect x="121" y="180" width="16" height="20" fill="#e4c27a"/><rect x="125" y="177" width="8" height="5" rx="1" fill="#555"/>
 <path d="M131 186 h6 l3 3 v13 h-9z" fill="#fff" stroke="#888" stroke-width="0.8"/>
 <path d="M129.5 219 l1.5 1.5 l1.5-1.5z" fill="#555"/>
 <!-- scissors etc -->
 <circle cx="149" cy="186" r="2" fill="none" stroke="#bbb"/><circle cx="155" cy="186" r="2" fill="none" stroke="#bbb"/><path d="M149.5 184 l5-6 M154.5 184 l-5-6" stroke="#bbb"/>
 <rect x="147" y="197" width="6" height="7" fill="none" stroke="#bbb"/><rect x="150" y="199" width="6" height="7" fill="#eee" stroke="#bbb"/>
 <path d="M148 221 l5-5 l3 3 l-5 2z M153 216 l3-3" stroke="#bbb" fill="#ccc"/>
 <!-- new slide -->
 <rect x="201.5" y="182.5" width="22" height="16" fill="#fff" stroke="#999"/><rect x="204" y="185" width="17" height="4" fill="#bbb"/><path d="M204 192 h17 M204 195 h17" stroke="#ccc"/>
 <circle cx="203" cy="180" r="3" fill="#f5d860"/>
 <rect x="233" y="180" width="10" height="9" fill="#ddd" stroke="#ccc"/>
 <rect x="233" y="197" width="10" height="9" fill="#ddd" stroke="#ccc"/>
 <rect x="236" y="214" width="7" height="9" fill="#fff" stroke="#999"/><rect x="233" y="213" width="8" height="3" fill="#f0c060"/>
 <!-- font boxes -->
 <rect x="278.5" y="180.5" width="66" height="16" fill="none" stroke="#e6e6e6"/><rect x="344.5" y="180.5" width="28" height="16" fill="none" stroke="#e6e6e6"/>
 <path d="M339 188 l1.5 1.5 l1.5-1.5z M367 188 l1.5 1.5 l1.5-1.5z" fill="#bbb"/>
 <path d="M411 181 l5 10 M415 186 l4 5 l-3 1z" stroke="#bbb" fill="#ccc"/>
 <!-- paragraph icons -->
 <g stroke="#bdbdbd" stroke-width="1" fill="none">
 <path d="M427 183.5h1.5 M430.5 183.5h9 M427 187.5h1.5 M430.5 187.5h9 M427 191.5h1.5 M430.5 191.5h9"/>
 <path d="M449 183.5h1.5 M452.5 183.5h8 M449 187.5h1.5 M452.5 187.5h8 M449 191.5h1.5 M452.5 191.5h8"/>
 <path d="M470.5 181v13" stroke="#e2e2e2"/>
 <path d="M480 184h6 M480 187.5h6 M480 191h6 M476 187.5 l2.5-2 v4z"/>
 <path d="M496 184h6 M496 187.5h6 M496 191h6 M494 187.5 l-2.5-2 v4z"/>
 <path d="M510.5 182v11 M508.5 184 l2-2 l2 2 M508.5 191 l2 2 l2-2 M514 184h7 M514 187.5h7 M514 191h7"/>
 <path d="M428 205.5h11 M428 208.5h8 M428 211.5h11 M428 214.5h8"/>
 <path d="M445 205.5h11 M447 208.5h7 M445 211.5h11 M447 214.5h7"/>
 <path d="M461 205.5h11 M464 208.5h8 M461 211.5h11 M464 214.5h8"/>
 <path d="M477 205.5h11 M477 208.5h11 M477 211.5h11 M477 214.5h11"/>
 <path d="M487.5 204v12 M500.5 204v12 M490 205.5h8 M490 208.5h8 M490 211.5h8 M490 214.5h8"/>
 <path d="M504.5 203v13" stroke="#e2e2e2"/>
 <rect x="508" y="204.5" width="9" height="12"/><path d="M510 207.5h5 M510 210.5h5 M510 213.5h5"/>
 <path d="M532.5 180v10 M535.5 180v10 M538.5 182v8"/>
 <rect x="532" y="197.5" width="10" height="9"/><path d="M537 196v12"/>
 <rect x="532" y="213.5" width="10" height="8" fill="#d4d4d4"/>
 </g>
 <path d="M443 187.5 l1.5 1.5 l1.5-1.5z M464 187.5 l1.5 1.5 l1.5-1.5z M524.5 187.5 l1.5 1.5 l1.5-1.5z M520.5 210 l1.5 1.5 l1.5-1.5z M368.5 210 l1.5 1.5 l1.5-1.5z M391.5 210 l1.5 1.5 l1.5-1.5z M414.5 210 l1.5 1.5 l1.5-1.5z" fill="#bbb"/>
 <path d="M354 214.5h11 M354 214.5 l2-1.5 M365 214.5 l-2-1.5 M396.5 203v13" stroke="#c4c4c4" stroke-width="0.9" fill="none"/>
 <!-- shapes gallery -->
 <rect x="629.5" y="175.5" width="106" height="47" fill="#fff" stroke="#d8d8d8"/>
 <g stroke="#c4c4c4" fill="none" stroke-width="1">
 <rect x="634" y="179" width="10" height="9"/><rect x="648" y="179" width="10" height="9"/><path d="M664 179l10 10 M680 179l10 10"/><rect x="696" y="180" width="11" height="8"/><ellipse cx="715" cy="184" rx="6" ry="4"/>
 <rect x="634" y="196" width="10" height="7" rx="2"/><path d="M648 203 l5-8 l5 8z M664 195 h4 v8 h5 M680 195 h4 v8 h5 M696 196 h6 v-2 l4 4 l-4 4 v-2 h-6z M713 194 h4 v5 h3 l-5 5 l-5-5 h3z"/>
 <path d="M634 213 h8 l3 4 v4 h-11z M650 212 l4 5 l-3 4 M664 212 q8 0 9 10 M680 221 q4-10 8 0 M698 212 q-3 0-2 5 q1 4 -2 4 M712 212 q3 0 2 5 q-1 4 2 4"/>
 <path d="M727 175.5v47"/>
 </g>
 <path d="M729 186 l2.5-2.5 l2.5 2.5z M729 200 l2.5 2.5 l2.5-2.5z" fill="#aaa"/>
 <!-- arrange -->
 <rect x="742" y="177" width="11" height="11" fill="#fff" stroke="#888"/><rect x="747" y="182" width="11" height="11" fill="#e8bf6a"/><rect x="752" y="188" width="10" height="10" fill="#fff" stroke="#888"/>
 <path d="M748.5 218 l1.5 1.5 l1.5-1.5z" fill="#555"/>
 <rect x="776" y="178" width="21" height="20" rx="4" fill="#f2f2f2" stroke="#ddd"/><path d="M785 200 l12-12" stroke="#888" stroke-width="3"/>
 <path d="M809 178 l5 5 l-5 4 l-4-4z" fill="#eee" stroke="#ccc"/><path d="M806 205 l10-8" stroke="#bbb"/><rect x="806" y="213" width="10" height="8" rx="3" fill="#ddd"/>
 <!-- editing -->
 <path d="M874 180 h3 v8 h-4z M879 180 h3 l1 8 h-4z" fill="#555"/>
 <text x="873" y="202" font-size="6" fill="#4a7ab8" font-family="Liberation Sans">ab</text><path d="M873 204 q4 2 8 0" stroke="#4a7ab8" fill="none"/>
 <path d="M876 212 v10 l2.5-2.5 l2 4 l1.5-0.7 l-2-4 h3z" fill="#fff" stroke="#777" stroke-width="0.8"/>
 <!-- dialog launchers -->
 <path d="M185 233.5 h5 v5 M187 235.5 l3 3" fill="none" stroke="#aaa" stroke-width="0.8"/>
 <path d="M415 233.5 h5 v5 M417 235.5 l3 3" fill="none" stroke="#aaa" stroke-width="0.8"/>
 <path d="M620 233.5 h5 v5 M622 235.5 l3 3" fill="none" stroke="#aaa" stroke-width="0.8"/>
 <path d="M862 233.5 h5 v5 M864 235.5 l3 3" fill="none" stroke="#aaa" stroke-width="0.8"/>
 <path d="M1109 237 l4-3.5 l4 3.5" fill="none" stroke="#555" stroke-width="1.2"/>
</svg>


<div class="a" style="left:130px;top:498px;width:76px;height:1.5px;background:#e08a8a"></div>
<div class="a" style="left:204px;top:496px;width:134px;height:16px;background:#fff;border:1px solid #d0d0d0;box-shadow:1px 1px 1px rgba(0,0,0,.1)"></div>
<div class="a" style="left:206px;top:497px;font-size:10px;line-height:14px;color:#555;white-space:nowrap;letter-spacing:-0.9px">研究生导师（学术+专硕）简介</div>
<svg class="a" style="left:203px;top:480px" width="14" height="18"><path d="M1.5 1.5 v13 l3-3 l2.5 5 l2-1 l-2.5-5 h4z" fill="#fff" stroke="#333" stroke-width="0.9"/></svg>
<div class="a" style="left:14px;top:547px;width:116px;height:23px;background:rgba(22,22,26,.85);border-radius:4px"></div>
<div class="a" style="left:113px;top:547px;width:17px;height:23px;background:rgba(90,90,96,.9);border-radius:0 4px 4px 0"></div>
<svg class="a" style="left:14px;top:547px" width="116" height="23"><circle cx="14.5" cy="11" r="6.2" fill="#fff"/><circle cx="12.3" cy="9.5" r="0.9" fill="#222"/><circle cx="16.7" cy="9.5" r="0.9" fill="#222"/><path d="M10.8 11.6 h7.4 q-0.5 3.6 -3.7 3.6 q-3.2 0 -3.7-3.6z" fill="#222"/><path d="M28.5 5 v13" stroke="#555"/><path d="M105 8 l-3 3.5 l3 3.5" fill="none" stroke="#eee" stroke-width="1.2"/></svg>
<div class="a" style="left:48px;top:552px;font-size:10px;line-height:13px;color:#d8d8d8;white-space:nowrap">说点什么...</div>
<!-- bottom overlay gradient over video -->
<div class="a" style="left:0;top:572px;width:1232px;height:63px;background:linear-gradient(rgba(0,0,0,0),rgba(0,0,0,0.12))"></div>
<div class="a" style="left:1203px;top:123px;width:27px;height:16px;background:#2b2c30;border-radius:3px 0 0 0"></div>
<svg class="a" style="left:1203px;top:123px" width="27" height="16"><path d="M7.5 11 l6-5.5 l6 5.5" fill="none" stroke="#fff" stroke-width="1.8"/></svg>
<div class="a" id="prog"></div>
<div class="a" id="progfill"></div>
<div class="a" id="ctrl"></div>

<svg class="a" style="left:1056px;top:629px" width="18" height="18"><circle cx="9" cy="8.5" r="8" fill="#fff"/></svg>
<div class="a cb" style="left:0;top:0">
<style>.cb div{position:absolute;font-size:9px;line-height:11px;color:#2a2a2a;white-space:nowrap}</style>
<div style="left:15px;top:661px">解除静音</div>
<div style="left:70px;top:661px">开启视频</div>
<div style="left:403px;top:661px">共享屏幕</div>
<div style="left:464px;top:661px">安全</div>
<div style="left:507px;top:661px">邀请</div>
<div style="left:543px;top:661px">管理成员(7)</div>
<div style="left:600px;top:639px;width:34px;height:34px;background:rgba(0,0,0,0.06);border-radius:3px"></div>
<div style="left:606px;top:661px">聊天</div>
<div style="left:651px;top:661px">录制</div>
<div style="left:701px;top:661px">回应</div>
<div style="left:745px;top:661px">分组讨论</div>
<div style="left:798px;top:661px">应用</div>
<div style="left:842px;top:661px">设置</div>
</div>
<svg class="a" style="left:0;top:639px" width="1232" height="44" viewBox="0 639 1232 44">
 <g fill="#3c3c3c">
  <rect x="31" y="642" width="7" height="11" rx="3.5"/><path d="M28 649 a6.5 6.5 0 0 0 13 0" fill="none" stroke="#3c3c3c" stroke-width="1.5"/><path d="M34.5 656 v2 M30 658.5 h9" stroke="#3c3c3c" stroke-width="1.5"/>
  <path d="M27 657 l15-14" stroke="#d03040" stroke-width="1.4"/>
  <rect x="78" y="645" width="13" height="10" rx="2"/><path d="M91 648 l5-3 v10 l-5-3z"/>
  <path d="M77 657 l17-13" stroke="#d03040" stroke-width="1.4"/>
 </g>
 <path d="M53 657 l3.5-3.5 l3.5 3.5 M106 657 l3.5-3.5 l3.5 3.5 M441 657 l3.5-3.5 l3.5 3.5 M678 657 l3.5-3.5 l3.5 3.5 M728 657 l3.5-3.5 l3.5 3.5" fill="none" stroke="#333" stroke-width="1.2"/>
 <rect x="413.5" y="642.5" width="15" height="11" rx="1.5" fill="#2d9a55"/><rect x="415" y="644" width="12" height="8" fill="#1e3a2a"/><path d="M417 650 q3-4 8-3" stroke="#fff" stroke-width="1" fill="none"/><rect x="415" y="655" width="12" height="2" fill="#2fbf6a"/>
 <path d="M466 644 l6.5-2.5 l6.5 2.5 v5 c0 4-3 6-6.5 7.5 c-3.5-1.5-6.5-3.5-6.5-7.5z" fill="#3a3a3a"/><path d="M469.5 648.5 l2.2 2.2 l3.5-3.8" fill="none" stroke="#fff" stroke-width="1.3"/>
 <circle cx="515" cy="645.5" r="3.8" fill="#3a3a3a"/><path d="M509 656 c0-5 3-6.5 6-6.5 c2 0 3 .5 4 1.5" fill="#3a3a3a"/><path d="M509 656 v0 h9" stroke="#3a3a3a"/><circle cx="521" cy="652" r="4.2" fill="none" stroke="#3a3a3a" stroke-width="1.7"/>
 <circle cx="563" cy="645.5" r="4" fill="#3a3a3a"/><path d="M556 656 c0-5 3-6.5 7-6.5 s7 1.5 7 6.5z" fill="#3a3a3a"/><path d="M568 642 c3 1 3 6 1 8 c3 1 5 3 5 6" fill="none" stroke="#3a3a3a" stroke-width="1.5"/>
 <path d="M609 642.5 h15 v10 h-9 l-3.5 3 v-3 h-2.5z" fill="#3a3a3a"/><circle cx="612.5" cy="647.5" r="1" fill="#fff"/><circle cx="616.5" cy="647.5" r="1" fill="#fff"/><circle cx="620.5" cy="647.5" r="1" fill="#fff"/>
 <circle cx="660" cy="649" r="7" fill="none" stroke="#3a3a3a" stroke-width="1.8"/><circle cx="660" cy="649" r="4.5" fill="#3a3a3a"/>
 <circle cx="711" cy="650" r="7" fill="#3a3a3a"/><circle cx="708.5" cy="648" r="1" fill="#ccc"/><circle cx="713.5" cy="648" r="1" fill="#ccc"/><path d="M707.5 651.5 q3.5 3 7 0" fill="#ccc"/><rect x="703" y="641" width="3" height="6" rx="1.5" fill="#3a3a3a"/>
 <rect x="758.5" y="641.5" width="7" height="6.5" rx="1.5" fill="#3a3a3a"/><rect x="755" y="649.5" width="6.5" height="6.5" rx="1.5" fill="#3a3a3a"/><rect x="763" y="649.5" width="6.5" height="6.5" rx="1.5" fill="#3a3a3a"/>
 <rect x="800" y="641.5" width="6.5" height="6.5" rx="1.5" fill="#3a3a3a"/><rect x="808.5" y="641.5" width="6.5" height="6.5" rx="1.5" fill="#3a3a3a"/><rect x="800" y="649.5" width="6.5" height="6.5" rx="1.5" fill="#3a3a3a"/><rect x="808.5" y="649.5" width="6.5" height="6.5" rx="1.5" fill="#3a3a3a"/><rect x="810" y="643" width="3.5" height="3" fill="#ccc"/>
 <path d="M850.5 641.5 l2 0 l1 2.2 2.3-1 1.4 1.4-1 2.3 2.3 1 v2 l-2.3 1 1 2.3-1.4 1.4-2.3-1-1 2.3h-2l-1-2.3-2.3 1-1.4-1.4 1-2.3-2.3-1v-2l2.3-1-1-2.3 1.4-1.4 2.3 1z" fill="#3a3a3a" transform="translate(-0.5 0) scale(1)"/><circle cx="851.5" cy="648.5" r="2.5" fill="#ccc"/>
 <rect x="24.5" y="656" width="4.5" height="21" fill="#fff"/><rect x="37.8" y="656" width="4.5" height="21" fill="#fff"/>
 <g fill="none" stroke="#fff" stroke-width="2.2">
  <path d="M974 657.5 h24 M974 664 h17 M974 670.5 h6 M983 670.5 h3"/>
  <path d="M1028 657.5 h24 M1028 664 h17 M1028 670.5 h6 M1037 670.5 h3"/>
  <path d="M1082 661 h6 l9-6.5 v22 l-9-6.5 h-6z" stroke-width="2" stroke-linejoin="round"/><path d="M1101.5 661 q2.5 4.5 0 9" stroke-width="2"/>
  <circle cx="1147" cy="666" r="3.6" stroke-width="2"/>
  <path d="M1191.5 663 v-6 h6 M1206 657 h6 v6 M1212 670 v6 h-6 M1197.5 676 h-6 v-6" stroke-width="2.2"/>
 </g>
 <circle cx="993.5" cy="671" r="5.5" fill="#33cc55"/><path d="M990.5 671 l2 2 l3.5-3.5" fill="none" stroke="#fff" stroke-width="1.3"/>
 <circle cx="1047" cy="671" r="4.5" fill="none" stroke="#fff" stroke-width="2.2"/>
 <path d="M1157.80 666.00 L1157.72 666.42 L1157.47 666.82 L1157.10 667.20 L1156.64 667.53 L1156.15 667.82 L1155.68 668.08 L1155.27 668.33 L1154.95 668.58 L1154.72 668.85 L1154.58 669.14 L1154.47 669.45 L1154.44 669.79 L1154.50 670.20 L1154.61 670.66 L1154.76 671.18 L1154.90 671.74 L1154.99 672.30 L1154.99 672.82 L1154.87 673.28 L1154.64 673.64 L1154.28 673.87 L1153.82 673.99 L1153.30 673.99 L1152.74 673.90 L1152.18 673.76 L1151.66 673.61 L1151.20 673.50 L1150.79 673.44 L1150.45 673.47 L1150.14 673.58 L1149.85 673.72 L1149.58 673.95 L1149.33 674.27 L1149.08 674.68 L1148.82 675.15 L1148.53 675.64 L1148.20 676.10 L1147.82 676.47 L1147.42 676.72 L1147.00 676.80 L1146.58 676.72 L1146.18 676.47 L1145.80 676.10 L1145.47 675.64 L1145.18 675.15 L1144.92 674.68 L1144.67 674.27 L1144.42 673.95 L1144.15 673.72 L1143.86 673.58 L1143.55 673.47 L1143.21 673.44 L1142.80 673.50 L1142.34 673.61 L1141.82 673.76 L1141.26 673.90 L1140.70 673.99 L1140.18 673.99 L1139.72 673.87 L1139.36 673.64 L1139.13 673.28 L1139.01 672.82 L1139.01 672.30 L1139.10 671.74 L1139.24 671.18 L1139.39 670.66 L1139.50 670.20 L1139.56 669.79 L1139.53 669.45 L1139.42 669.14 L1139.28 668.85 L1139.05 668.58 L1138.73 668.33 L1138.32 668.08 L1137.85 667.82 L1137.36 667.53 L1136.90 667.20 L1136.53 666.82 L1136.28 666.42 L1136.20 666.00 L1136.28 665.58 L1136.53 665.18 L1136.90 664.80 L1137.36 664.47 L1137.85 664.18 L1138.32 663.92 L1138.73 663.67 L1139.05 663.42 L1139.28 663.15 L1139.42 662.86 L1139.53 662.55 L1139.56 662.21 L1139.50 661.80 L1139.39 661.34 L1139.24 660.82 L1139.10 660.26 L1139.01 659.70 L1139.01 659.18 L1139.13 658.72 L1139.36 658.36 L1139.72 658.13 L1140.18 658.01 L1140.70 658.01 L1141.26 658.10 L1141.82 658.24 L1142.34 658.39 L1142.80 658.50 L1143.21 658.56 L1143.55 658.53 L1143.86 658.42 L1144.15 658.28 L1144.42 658.05 L1144.67 657.73 L1144.92 657.32 L1145.18 656.85 L1145.47 656.36 L1145.80 655.90 L1146.18 655.53 L1146.58 655.28 L1147.00 655.20 L1147.42 655.28 L1147.82 655.53 L1148.20 655.90 L1148.53 656.36 L1148.82 656.85 L1149.08 657.32 L1149.33 657.73 L1149.58 658.05 L1149.85 658.28 L1150.14 658.42 L1150.45 658.53 L1150.79 658.56 L1151.20 658.50 L1151.66 658.39 L1152.18 658.24 L1152.74 658.10 L1153.30 658.01 L1153.82 658.01 L1154.28 658.13 L1154.64 658.36 L1154.87 658.72 L1154.99 659.18 L1154.99 659.70 L1154.90 660.26 L1154.76 660.82 L1154.61 661.34 L1154.50 661.80 L1154.44 662.21 L1154.47 662.55 L1154.58 662.86 L1154.72 663.15 L1154.95 663.42 L1155.27 663.67 L1155.68 663.92 L1156.15 664.18 L1156.64 664.47 L1157.10 664.80 L1157.47 665.18 L1157.72 665.58Z" fill="none" stroke="#fff" stroke-width="2" stroke-linejoin="round"/>
 <rect x="1156.5" y="643.5" width="64" height="25" rx="4" fill="none" stroke="#c04556" stroke-width="1"/>
</svg>
<div class="a" style="left:1163px;top:649px;font-size:12.5px;line-height:15px;color:rgba(185,60,80,.72);white-space:nowrap;letter-spacing:-0.3px">结束会议</div>
<div class="a" style="left:75px;top:654px;font-size:16px;line-height:19px;color:#fff;white-space:nowrap;letter-spacing:-0.1px">01:02:16 / 01:12:23</div>
<div class="a" id="blk"></div>
<div class="a" id="foot"></div>
<svg class="a" style="left:0;top:693px" width="1232" height="101" viewBox="0 693 1232 101">
 <defs>
  <pattern id="dots" x="0" y="693" width="22" height="18" patternUnits="userSpaceOnUse"><ellipse cx="11" cy="9" rx="5" ry="3.5" fill="#1e3b70" opacity="0.5"/></pattern>
  <radialGradient id="dg" cx="0.6" cy="0" r="0.8"><stop offset="0" stop-color="#fff" stop-opacity="1"/><stop offset="1" stop-color="#fff" stop-opacity="0"/></radialGradient>
  <mask id="dm"><rect x="0" y="693" width="1232" height="101" fill="url(#dg)"/></mask>
 </defs>
 <rect x="0" y="693" width="1232" height="101" fill="#142a5a"/>
 <rect x="0" y="693" width="1232" height="101" fill="url(#dots)" mask="url(#dm)"/>
 <rect x="20" y="716" width="57" height="56" fill="#fff"/>
 <circle cx="48.7" cy="744" r="26.4" fill="#3aa35a"/><circle cx="48.7" cy="744" r="25.4" fill="#3572bd"/><circle cx="48.7" cy="744" r="16.8" fill="#3aa35a"/><circle cx="48.7" cy="744" r="16" fill="#fff"/>
 <g><rect x="30.2" y="730.7" width="2.6" height="2.6" fill="#e8eef8" opacity=".8"/><rect x="36.9" y="724.5" width="2.6" height="2.6" fill="#e8eef8" opacity=".8"/><rect x="47.4" y="721.7" width="2.6" height="2.6" fill="#e8eef8" opacity=".8"/><rect x="57.9" y="724.5" width="2.6" height="2.6" fill="#e8eef8" opacity=".8"/><rect x="64.6" y="730.7" width="2.6" height="2.6" fill="#e8eef8" opacity=".8"/><circle cx="27.7" cy="744.0" r="0.7" fill="#e8eef8"/><circle cx="69.7" cy="744.0" r="0.7" fill="#e8eef8"/><rect x="28.1" y="750.1" width="1.8" height="2.2" fill="#e8eef8" opacity=".85"/><rect x="29.4" y="753.0" width="1.8" height="2.2" fill="#e8eef8" opacity=".85"/><rect x="31.1" y="755.7" width="1.8" height="2.2" fill="#e8eef8" opacity=".85"/><rect x="33.3" y="758.1" width="1.8" height="2.2" fill="#e8eef8" opacity=".85"/><rect x="35.8" y="760.1" width="1.8" height="2.2" fill="#e8eef8" opacity=".85"/><rect x="38.5" y="761.7" width="1.8" height="2.2" fill="#e8eef8" opacity=".85"/><rect x="41.5" y="762.9" width="1.8" height="2.2" fill="#e8eef8" opacity=".85"/><rect x="44.6" y="763.7" width="1.8" height="2.2" fill="#e8eef8" opacity=".85"/><rect x="47.8" y="763.9" width="1.8" height="2.2" fill="#e8eef8" opacity=".85"/><rect x="51.0" y="763.7" width="1.8" height="2.2" fill="#e8eef8" opacity=".85"/><rect x="54.1" y="762.9" width="1.8" height="2.2" fill="#e8eef8" opacity=".85"/><rect x="57.1" y="761.7" width="1.8" height="2.2" fill="#e8eef8" opacity=".85"/><rect x="59.8" y="760.1" width="1.8" height="2.2" fill="#e8eef8" opacity=".85"/><rect x="62.3" y="758.1" width="1.8" height="2.2" fill="#e8eef8" opacity=".85"/><rect x="64.5" y="755.7" width="1.8" height="2.2" fill="#e8eef8" opacity=".85"/><rect x="66.2" y="753.0" width="1.8" height="2.2" fill="#e8eef8" opacity=".85"/><rect x="67.5" y="750.1" width="1.8" height="2.2" fill="#e8eef8" opacity=".85"/></g>
 <rect x="34" y="739.5" width="29.5" height="9" fill="#2f6cb8"/>
 <g fill="#fff"><rect x="36" y="742" width="2" height="1.5"/><rect x="40" y="742" width="2" height="1.5"/><rect x="44" y="742" width="2" height="1.5"/><rect x="50" y="742" width="2" height="1.5"/><rect x="54" y="742" width="2" height="1.5"/><rect x="58" y="742" width="2" height="1.5"/><rect x="46.5" y="745" width="1.2" height="3.5"/><rect x="49.5" y="745" width="1.2" height="3.5"/></g>
 <path d="M45 735.5 h2 M48 735.5 h1.5 M51 735.5 h2" stroke="#2f6cb8" stroke-width="1.6"/>
 <path d="M43.5 753.5 h10" stroke="#2f6cb8" stroke-width="1.5" stroke-dasharray="1.8 0.7"/>
 <g fill="none" stroke="#fff" stroke-width="1.5">
  <circle cx="105.5" cy="759" r="4.5"/><path d="M98.5 771 c0-5 3-7.5 7-7.5 s7 2.5 7 7.5"/>
 </g>
 <path d="M189.5 755.5 v15" stroke="#e4e9f2" stroke-width="1.1"/>
 <rect x="518.5" y="716.5" width="57" height="20.5" rx="2" fill="none" stroke="#4d8ae0" stroke-width="1"/>
 <g fill="none" stroke="#fff" stroke-width="1.5" stroke-linejoin="round">
  <path d="M876.5 754.5 l9.5 16 h-19z"/><path d="M876.5 760 v5" /><circle cx="876.5" cy="767.5" r="0.6" fill="#fff"/>
  <path d="M999 754.5 h-7.5 v16 h16 v-7.5 M1001.5 754.5 h5 v5 M1006.5 754.5 l-8 8"/>
  <circle cx="1089" cy="762.5" r="8.3"/><path d="M1080.7 762.5 h16.6"/><ellipse cx="1089" cy="762.5" rx="3.8" ry="8.3"/>
 </g>
 <path d="M1206 762.5 l3 3 l3-3" fill="none" stroke="#c8d0e0" stroke-width="1.2"/>
</svg>
<div class="a" style="left:95px;top:712px;font-size:20px;line-height:26px;color:#fff;white-space:nowrap;letter-spacing:0.3px">2024年南京体育学院硕士研究生招生宣讲会</div>
<div class="a" style="left:523px;top:718px;font-size:15px;line-height:17px;color:#70a8f2;white-space:nowrap">回放中</div>
<div class="a" style="left:124px;top:752px;font-size:16px;line-height:20px;color:#fff;white-space:nowrap">主持人</div>
<div class="a" style="left:208px;top:752px;font-size:16px;line-height:20px;color:#fff;white-space:nowrap;letter-spacing:-0.2px">4365 次观看</div>
<div class="a" style="left:893px;top:752px;font-size:16px;line-height:20px;color:#fff;white-space:nowrap">举报反馈</div>
<div class="a" style="left:1017px;top:752px;font-size:16px;line-height:20px;color:#fff;white-space:nowrap">分享</div>
<div class="a" style="left:1107px;top:752px;font-size:16px;line-height:20px;color:#fff;white-space:nowrap;letter-spacing:-0.3px">简体中文-ZH</div>

</body></html>
